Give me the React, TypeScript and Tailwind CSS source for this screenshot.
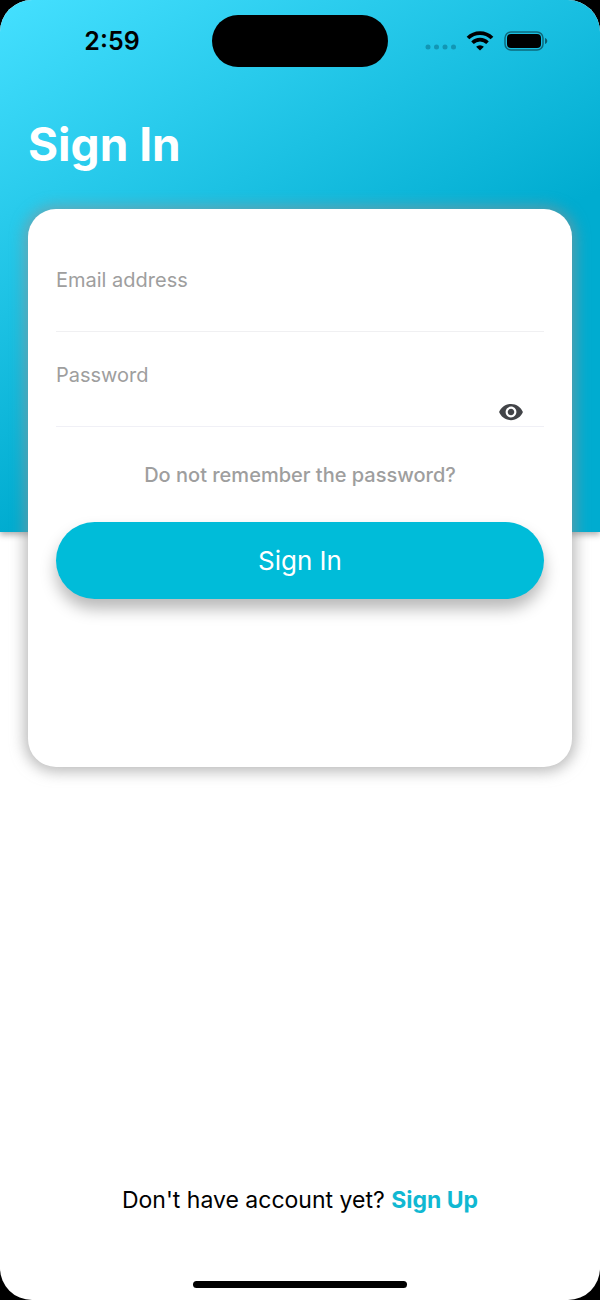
import { useState } from 'react'
import { MdVisibility, MdVisibilityOff } from 'react-icons/md'

function StatusBar() {
  return (
    <div className="grid h-[52px] grid-cols-[1fr_176px_1fr] items-center">
      <time className="pl-3 text-center text-[25px] leading-8 font-semibold text-black">2:59</time>
      <div className="h-full rounded-full bg-black" />
      <div className="flex items-center pl-[37px]">
        <svg className="mt-3 h-[6px] w-[32px] shrink-0" viewBox="0 0 32 6" fill="#1296b4" aria-hidden="true">
          <circle cx="3" cy="3" r="2.5" />
          <circle cx="11.5" cy="3" r="2.5" />
          <circle cx="20" cy="3" r="2.5" />
          <circle cx="28.5" cy="3" r="2.5" />
        </svg>
        <svg className="ml-[9px] h-5 w-7 shrink-0" viewBox="0 0 28 20" aria-hidden="true">
          <path d="M2 7a17 17 0 0 1 24 0" fill="none" stroke="black" strokeWidth="3.8" />
          <path d="M6.5 11.7a10.6 10.6 0 0 1 15 0" fill="none" stroke="black" strokeWidth="3.6" />
          <path d="M14 19.6l-3.9-3.9a5.7 5.7 0 0 1 7.8 0z" fill="black" />
        </svg>
        <svg className="ml-[10px] h-5 w-11 shrink-0" viewBox="0 0 44 20" aria-hidden="true">
          <rect x="1" y="1" width="38" height="18" rx="6" fill="none" stroke="black" strokeOpacity="0.45" strokeWidth="1.5" />
          <rect x="3" y="3" width="34" height="14" rx="4" fill="black" />
          <path d="M41 7c3 1 3 5 0 6z" fill="black" fillOpacity="0.5" />
        </svg>
      </div>
    </div>
  )
}

export default function App() {
  const [showPassword, setShowPassword] = useState(false)

  return (
    <div className="min-h-screen bg-black font-[Inter,sans-serif]">
      <div className="grid min-h-screen grid-rows-[532px_1fr] overflow-hidden rounded-[32px] bg-white">
        <div className="col-start-1 row-start-1 bg-[linear-gradient(150deg,#45e0ff_0%,#00acd0_61%)] shadow-[0_3px_6px_rgba(0,0,0,0.3)]" />

        <div className="col-start-1 row-span-2 row-start-1 flex flex-col pt-[15px]">
          <StatusBar />

          <main className="flex flex-1 flex-col px-7">
            <h1 className="mt-[49px] text-[46px] leading-[56px] font-bold text-white">Sign In</h1>

            <form
              className="mt-[37px] flex min-h-[558px] flex-col rounded-[28px] bg-white px-7 pt-[59px] shadow-[0_1px_14px_4px_rgba(145,145,145,0.6)]"
              onSubmit={(e) => e.preventDefault()}
            >
              <label htmlFor="email" className="text-[20px] leading-6 text-[#9e9e9e]">
                Email address
              </label>
              <input
                id="email"
                type="email"
                className="h-10 w-full border-b border-[#f0f0f2] text-[20px] outline-none"
              />

              <label htmlFor="password" className="mt-[31px] text-[20px] leading-6 text-[#9e9e9e]">
                Password
              </label>
              <div className="flex h-10 items-end border-b border-[#f0f0f6]">
                <input
                  id="password"
                  type={showPassword ? 'text' : 'password'}
                  className="h-full min-w-0 flex-1 text-[20px] outline-none"
                />
                <button
                  type="button"
                  aria-label="Toggle password visibility"
                  className="mr-5 mb-px text-[26px] text-[#424448]"
                  onClick={() => setShowPassword(!showPassword)}
                >
                  {showPassword ? <MdVisibilityOff /> : <MdVisibility />}
                </button>
              </div>

              <a href="#forgot" className="mt-9 text-center text-[20px] leading-6 font-medium text-[#9e9e9e]">
                Do not remember the password?
              </a>

              <button
                type="submit"
                className="mt-[35px] h-[77px] w-full rounded-full bg-[#00bcd9] text-[26px] text-white shadow-[0_10px_16px_rgba(0,0,0,0.28)]"
              >
                Sign In
              </button>
            </form>

            <p className="mt-auto text-center text-[23px] leading-7 text-black">
              Don't have account yet?{' '}
              <a href="#signup" className="font-bold text-[#10b8d2]">
                Sign Up
              </a>
            </p>
          </main>

          <div className="mx-auto mt-[67px] mb-3 h-[7px] w-[214px] rounded-full bg-black" />
        </div>
      </div>
    </div>
  )
}
